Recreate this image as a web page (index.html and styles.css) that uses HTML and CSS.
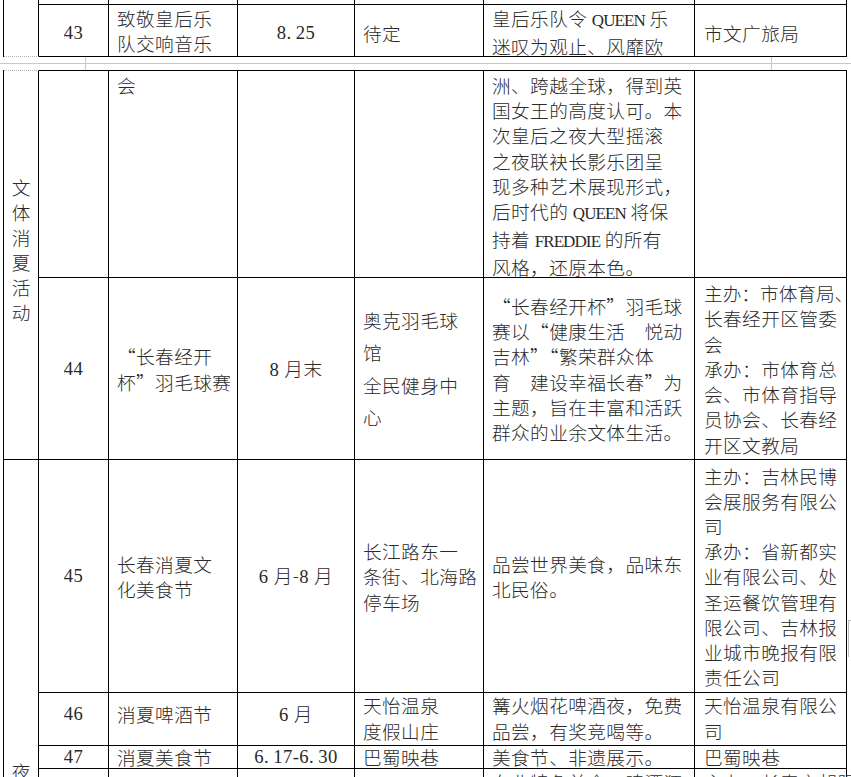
FILE: index.html
```html
<!DOCTYPE html>
<html lang="zh-CN">
<head>
<meta charset="utf-8">
<title>文体消夏活动</title>
<link rel="stylesheet" href="styles.css">
</head>
<body>
<div class="page">
  <div class="grid t1">
    <div class="cat k1"></div>
    <div class="cell"></div><div class="cell"></div><div class="cell"></div><div class="cell"></div><div class="cell"></div><div class="cell"></div>
    <div class="cell ctr dn"><span class="la">43</span></div>
    <div class="cell top"><span class="l">致敬皇后乐</span><span class="l">队交响音乐</span></div>
    <div class="cell ctr dn"><span class="la">8<span class="p">.</span>25</span></div>
    <div class="cell dn">待定</div>
    <div class="cell top"><span class="l">皇后乐队令 <span class="en">QUEEN</span> 乐</span><span class="l">迷叹为观止、风靡欧</span></div>
    <div class="cell c6 dn">市文广旅局</div>
  </div>

  <div class="gap"><div></div><div></div><div></div></div>

  <div class="grid t2">
    <div class="cat k2"><span class="l">文</span><span class="l">体</span><span class="l">消</span><span class="l">夏</span><span class="l">活</span><span class="l">动</span></div>
    <div class="cell first"></div>
    <div class="cell first top pt"><span class="l">会</span></div>
    <div class="cell first"></div>
    <div class="cell first"></div>
    <div class="cell first top pt">
      <span class="l">洲、跨越全球，得到英</span>
      <span class="l">国女王的高度认可。本</span>
      <span class="l">次皇后之夜大型摇滚</span>
      <span class="l">之夜联袂长影乐团呈</span>
      <span class="l">现多种艺术展现形式，</span>
      <span class="l">后时代的 <span class="en">QUEEN</span> 将保</span>
      <span class="l">持着 <span class="en">FREDDIE</span> 的所有</span>
      <span class="l">风格，还原本色。</span>
    </div>
    <div class="cell first"></div>

    <div class="cell ctr"><span class="la">44</span></div>
    <div class="cell"><span class="l">“长春经开</span><span class="l">杯”羽毛球赛</span></div>
    <div class="cell ctr"><span><span class="la">8 </span>月末</span></div>
    <div class="cell loose"><span class="l">奥克羽毛球</span><span class="l">馆</span><span class="l">全民健身中</span><span class="l">心</span></div>
    <div class="cell">
      <span class="l">“长春经开杯”羽毛球</span>
      <span class="l">赛以“健康生活　悦动</span>
      <span class="l">吉林”“繁荣群众体</span>
      <span class="l">育　建设幸福长春”为</span>
      <span class="l">主题，旨在丰富和活跃</span>
      <span class="l">群众的业余文体生活。</span>
    </div>
    <div class="cell c6">
      <span class="l snug">主办：市体育局<span class="hang">、</span></span>
      <span class="l">长春经开区管委</span>
      <span class="l">会</span>
      <span class="l">承办：市体育总</span>
      <span class="l">会、市体育指导</span>
      <span class="l">员协会、长春经</span>
      <span class="l">开区文教局</span>
    </div>

    <div class="cat k3"><span class="l">夜</span></div>
    <div class="cell ctr"><span class="la">45</span></div>
    <div class="cell"><span class="l">长春消夏文</span><span class="l">化美食节</span></div>
    <div class="cell ctr"><span><span class="la">6 </span>月-<span class="la">8 </span>月</span></div>
    <div class="cell"><span class="l">长江路东一</span><span class="l">条街、北海路</span><span class="l">停车场</span></div>
    <div class="cell"><span class="l">品尝世界美食，品味东</span><span class="l">北民俗。</span></div>
    <div class="cell c6">
      <span class="l">主办：吉林民博</span>
      <span class="l">会展服务有限公</span>
      <span class="l">司</span>
      <span class="l">承办：省新都实</span>
      <span class="l">业有限公司、处</span>
      <span class="l">圣运餐饮管理有</span>
      <span class="l">限公司、吉林报</span>
      <span class="l">业城市晚报有限</span>
      <span class="l">责任公司</span>
    </div>

    <div class="cell ctr up"><span class="la">46</span></div>
    <div class="cell up">消夏啤酒节</div>
    <div class="cell ctr up"><span><span class="la">6 </span>月</span></div>
    <div class="cell two"><span class="l">天怡温泉</span><span class="l">度假山庄</span></div>
    <div class="cell two"><span class="l">篝火烟花啤酒夜，免费</span><span class="l">品尝，有奖竞喝等。</span></div>
    <div class="cell c6 two"><span class="l">天怡温泉有限公</span><span class="l">司</span></div>

    <div class="cell ctr tight"><span class="la">47</span></div>
    <div class="cell tight">消夏美食节</div>
    <div class="cell ctr tight"><span class="la">6<span class="p">.</span>17-6<span class="p">.</span>30</span></div>
    <div class="cell tight">巴蜀映巷</div>
    <div class="cell tight">美食节、非遗展示。</div>
    <div class="cell c6 tight">巴蜀映巷</div>

    <div class="cell"></div>
    <div class="cell"></div>
    <div class="cell"></div>
    <div class="cell"></div>
    <div class="cell top"><span class="l">东北特色美食、啤酒狂</span></div>
    <div class="cell c6 top"><span class="l">主办：长春市朝阳</span></div>
  </div>

  <div class="mark"></div>
</div>
</body>
</html>
```

FILE: styles.css
```css
* {
  box-sizing: border-box;
}

body {
  margin: 0;
  background: #ffffff;
}

.page {
  position: relative;
  width: 851px;
  height: 777px;
  overflow: hidden;
  background: #ffffff;
  font-family: "Noto Sans CJK SC", sans-serif;
  font-size: 18.67px;
  font-weight: 300;
  color: #2a2a2a;
}

.grid {
  display: grid;
  width: 844px;
  margin-left: 3px;
  border-left: 1px solid #000;
  grid-template-columns: 35px 70px 129px 117px 129px 211px 152px;
}

.t1 {
  grid-template-rows: 5px 52px;
}

.t2 {
  grid-template-rows: 208px 182px 233px 53px 23px 40px;
}

.cell {
  display: flex;
  flex-direction: column;
  justify-content: center;
  min-width: 0;
  padding-left: 8px;
  border-right: 1px solid #000;
  border-bottom: 1px solid #000;
  line-height: 25.2px;
  white-space: nowrap;
  letter-spacing: 0.4px;
}

.first {
  border-top: 1px solid #000;
}

.top {
  justify-content: flex-start;
}

.pt {
  padding-top: 1px;
}

.ctr {
  align-items: center;
  padding-left: 0;
}

.c6 {
  padding-left: 9px;
}

.snug {
  letter-spacing: 0;
}

.hang {
  display: inline-block;
  width: 8px;
  overflow: visible;
}

.dn {
  padding-top: 4px;
}

.up {
  padding-bottom: 10px;
}

.two {
  line-height: 26px;
  padding-bottom: 2px;
}

.loose {
  line-height: 32.5px;
}

.tight {
  line-height: 22px;
}

.l {
  display: block;
}

.la {
  font-family: "Liberation Serif", serif;
  font-weight: 400;
}

.en {
  font-family: "Liberation Serif", serif;
  font-weight: 400;
  font-size: 17px;
  letter-spacing: -0.9px;
}

.p {
  display: inline-block;
  width: 9.33px;
  text-align: left;
}

.cat {
  border-right: 1px solid #000;
  text-align: center;
  line-height: 25px;
  grid-row: span 2;
}

.k1 {
  border-bottom: 1px dotted #b4b4b4;
}

.k2 {
  grid-row: span 2;
  border-top: 1px dotted #b4b4b4;
  border-bottom: 1px solid #000;
  padding-top: 103px;
}

.k3 {
  grid-row: span 4;
  padding-top: 298px;
}

.gap {
  display: grid;
  height: 13px;
  grid-template-columns: 86px 686px 1fr;
  background: linear-gradient(#c8c8c8, #c8c8c8) 0 6px / 100% 1px no-repeat;
}

.gap > div:nth-child(-n+2) {
  border-right: 1px solid #c8c8c8;
}

.mark {
  position: absolute;
  left: 848px;
  top: 620px;
  width: 4px;
  height: 37px;
  border-left: 1px solid #bdbdbd;
  border-top: 1px solid #bdbdbd;
}
```
